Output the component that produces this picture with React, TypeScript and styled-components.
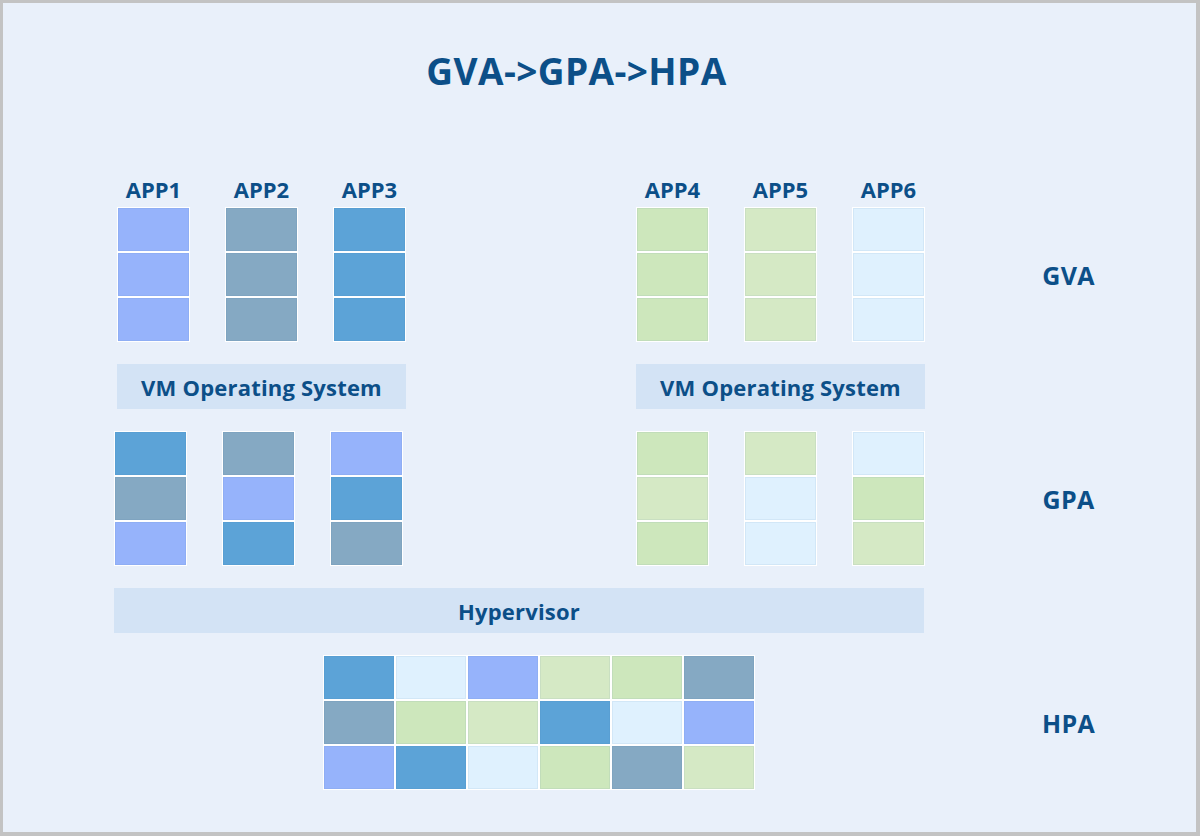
import React from 'react';
import styled, { createGlobalStyle } from 'styled-components';

type Tone = 'violet' | 'slate' | 'blue' | 'green' | 'lime' | 'pale';

const tones: Record<Tone, string> = {
  violet: '#96b3fb',
  slate: '#85a9c3',
  blue: '#5ca3d7',
  green: '#cde7bc',
  lime: '#d5e9c5',
  pale: '#dff1fe',
};

const GlobalStyle = createGlobalStyle`
  html, body {
    margin: 0;
    padding: 0;
    background: #e9f0fa;
  }
  * {
    box-sizing: border-box;
  }
`;

const Frame = styled.div`
  width: 1200px;
  height: 836px;
  border: 3px solid #c3c3c3;
  border-right-width: 4px;
  border-bottom-width: 4px;
  background: #e9f0fa;
  padding: 46px 0 0 111px;
  font-family: 'Open Sans', 'Noto Sans', sans-serif;
  font-weight: 700;
  color: #0c4f88;
`;

const Title = styled.h1`
  margin: 0 0 83px;
  width: 925px;
  text-align: center;
  font-size: 37px;
  line-height: 44px;
  font-weight: 700;
  letter-spacing: 0.4px;
`;

const Body = styled.div`
  display: flex;
  flex-direction: column;
  gap: 22px;
`;

const Level = styled.div`
  display: flex;
  align-items: flex-end;
`;

const Diagram = styled.div`
  width: 811px;
  display: flex;
  align-items: flex-end;
`;

const LevelLabel = styled.div`
  flex: 1;
  height: 135px;
  display: flex;
  align-items: center;
  justify-content: center;
  padding-left: 16px;
  font-size: 25px;
  letter-spacing: 0.3px;
`;

const Group = styled.div<{ $offset: number }>`
  width: 289px;
  margin-left: ${(p) => p.$offset}px;
  display: flex;
  justify-content: space-between;
  align-items: flex-end;
`;

const AppColumn = styled.div`
  display: flex;
  flex-direction: column;
  align-items: center;
`;

const AppName = styled.div`
  font-size: 22px;
  line-height: 26px;
  margin-bottom: 5px;
`;

const Stack = styled.div`
  width: 73px;
  display: flex;
  flex-direction: column;
`;

const Cell = styled.div<{ $tone: Tone }>`
  width: 73px;
  height: 45px;
  border: 1px solid #ffffff;
  background: ${(p) => tones[p.$tone]};
  box-shadow: inset 0 0 0 1px rgba(60, 110, 170, 0.08);
`;

const Bar = styled.div<{ $width: number; $offset: number; $size: number }>`
  width: ${(p) => p.$width}px;
  height: 45px;
  margin-left: ${(p) => p.$offset}px;
  background: #d3e3f5;
  display: flex;
  align-items: center;
  justify-content: center;
  font-size: ${(p) => p.$size}px;
  letter-spacing: 0.2px;
`;

const HostGrid = styled.div<{ $offset: number }>`
  margin-left: ${(p) => p.$offset}px;
  display: grid;
  grid-template-columns: repeat(6, 72px);
  grid-auto-rows: 45px;

  & > div {
    width: 72px;
  }
`;

const gvaLeft: { name: string; cells: Tone[] }[] = [
  { name: 'APP1', cells: ['violet', 'violet', 'violet'] },
  { name: 'APP2', cells: ['slate', 'slate', 'slate'] },
  { name: 'APP3', cells: ['blue', 'blue', 'blue'] },
];

const gvaRight: { name: string; cells: Tone[] }[] = [
  { name: 'APP4', cells: ['green', 'green', 'green'] },
  { name: 'APP5', cells: ['lime', 'lime', 'lime'] },
  { name: 'APP6', cells: ['pale', 'pale', 'pale'] },
];

const gpaLeft: Tone[][] = [
  ['blue', 'slate', 'violet'],
  ['slate', 'violet', 'blue'],
  ['violet', 'blue', 'slate'],
];

const gpaRight: Tone[][] = [
  ['green', 'lime', 'green'],
  ['lime', 'pale', 'pale'],
  ['pale', 'green', 'lime'],
];

const hpa: Tone[] = [
  'blue', 'pale', 'violet', 'lime', 'green', 'slate',
  'slate', 'green', 'lime', 'blue', 'pale', 'violet',
  'violet', 'blue', 'pale', 'green', 'slate', 'lime',
];

const StackOf = ({ cells }: { cells: Tone[] }): JSX.Element => (
  <Stack>
    {cells.map((tone, i) => (
      <Cell key={i} $tone={tone} />
    ))}
  </Stack>
);

const App = (): JSX.Element => (
  <>
    <GlobalStyle />
    <Frame>
      <Title>GVA-&gt;GPA-&gt;HPA</Title>
      <Body>
        <Level>
          <Diagram>
            <Group $offset={3}>
              {gvaLeft.map((app) => (
                <AppColumn key={app.name}>
                  <AppName>{app.name}</AppName>
                  <StackOf cells={app.cells} />
                </AppColumn>
              ))}
            </Group>
            <Group $offset={230}>
              {gvaRight.map((app) => (
                <AppColumn key={app.name}>
                  <AppName>{app.name}</AppName>
                  <StackOf cells={app.cells} />
                </AppColumn>
              ))}
            </Group>
          </Diagram>
          <LevelLabel>GVA</LevelLabel>
        </Level>

        <Diagram>
          <Bar $width={289} $offset={3} $size={22}>VM Operating System</Bar>
          <Bar $width={289} $offset={230} $size={22}>VM Operating System</Bar>
        </Diagram>

        <Level>
          <Diagram>
            <Group $offset={0}>
              {gpaLeft.map((cells, i) => (
                <StackOf key={i} cells={cells} />
              ))}
            </Group>
            <Group $offset={233}>
              {gpaRight.map((cells, i) => (
                <StackOf key={i} cells={cells} />
              ))}
            </Group>
          </Diagram>
          <LevelLabel>GPA</LevelLabel>
        </Level>

        <Diagram>
          <Bar $width={810} $offset={0} $size={22}>Hypervisor</Bar>
        </Diagram>

        <Level>
          <Diagram>
            <HostGrid $offset={209}>
              {hpa.map((tone, i) => (
                <Cell key={i} $tone={tone} />
              ))}
            </HostGrid>
          </Diagram>
          <LevelLabel>HPA</LevelLabel>
        </Level>
      </Body>
    </Frame>
  </>
);

export default App;
